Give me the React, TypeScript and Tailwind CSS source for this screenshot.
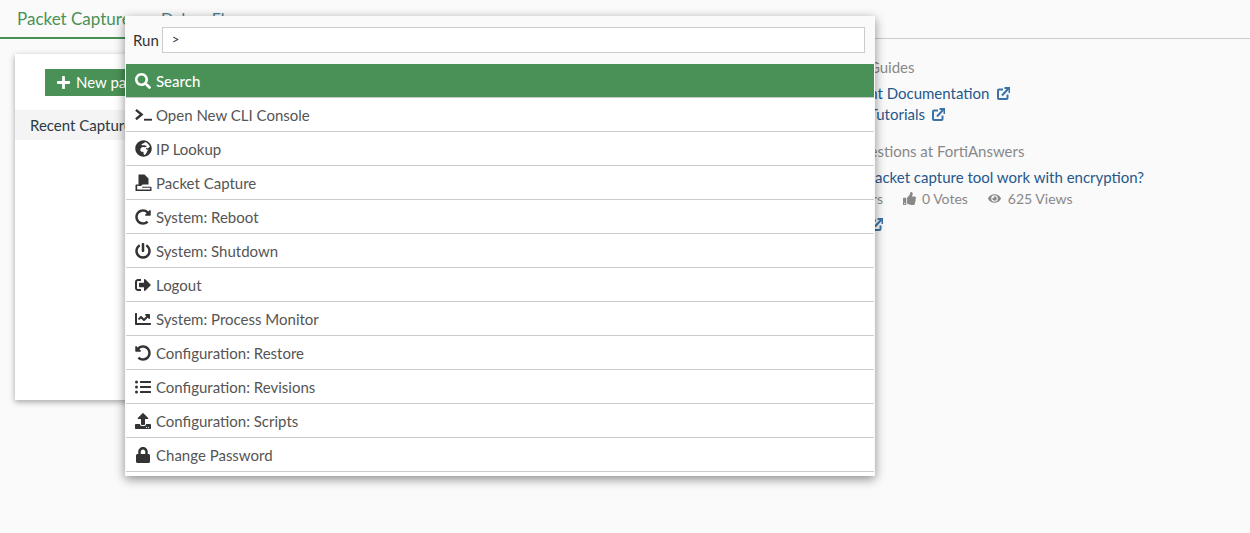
import React from "react";
import { FaSearch, FaGlobeAfrica, FaPowerOff, FaSignOutAlt, FaChartLine, FaUndoAlt, FaRedoAlt, FaListUl, FaUpload, FaLock, FaPlus, FaThumbsUp, FaEye } from "react-icons/fa";

const Terminal = () => (
  <svg width="17" height="14" viewBox="0 0 18 14" fill="none" stroke="currentColor">
    <path d="M1 1.500 L7 6.500 L1 11.500" strokeWidth="2.500" />
    <path d="M9.500 12 H18" strokeWidth="2" />
  </svg>
);
const Capture = () => (
  <svg width="17" height="17" viewBox="0 0 17 17" fill="currentColor">
    <path d="M3.500 .5h6l4 4v6H9c-1.400 0-2.200.4-2.800 1.500H3.500z" />
    <path d="M1.500 10.500h3v1.200H2.200v3.800h13v-1.700H8.500c-1 0-1.500-.4-1.800-1h8.800c.6 0 1 .4 1 1v2.700c0 .6-.4 1-1 1H1.500c-.6 0-1-.4-1-1v-5c0-.6.4-1 1-1z" />
  </svg>
);
const Ext = () => (
  <svg width="13" height="13" viewBox="0 0 13 13" fill="none" stroke="#3b73a6" strokeWidth="2" className="shrink-0">
    <path d="M6 2.500H2a1 1 0 0 0-1 1V11a1 1 0 0 0 1 1h7.500a1 1 0 0 0 1-1V7.500" />
    <path d="M5 8.500 L11.500 1.500" />
    <path d="M7.500 .9h5v5" />
  </svg>
);

const rows: [React.ReactNode, string][] = [
  [<Terminal />, "Open New CLI Console"],
  [<FaGlobeAfrica size={17} />, "IP Lookup"],
  [<Capture />, "Packet Capture"],
  [<FaRedoAlt size={16} />, "System: Reboot"],
  [<FaPowerOff size={16} />, "System: Shutdown"],
  [<FaSignOutAlt size={16} />, "Logout"],
  [<FaChartLine size={16} />, "System: Process Monitor"],
  [<FaUndoAlt size={16} />, "Configuration: Restore"],
  [<FaListUl size={16} />, "Configuration: Revisions"],
  [<FaUpload size={16} />, "Configuration: Scripts"],
  [<FaLock size={16} />, "Change Password"],
];

export default function App() {
  return (
    <div className="relative h-[533px] w-[1250px] overflow-hidden bg-[#fafafa] font-['Lato','Open_Sans',sans-serif] text-[15px] text-[#333]">
      <div className="flex h-[39px] border-b border-[#ccc]">
        <div className="h-[39px] w-[146px] border-b-2 border-[#4a9157] pl-[17px] pt-[6px] text-[17px] text-[#4a9157]">Packet Capture</div>
        <div className="pl-[15px] pt-[6px] text-[16px] text-[#4a7a90]">Debug Flow</div>
      </div>
      <div className="flex pl-[15px] pt-[15px]">
        <div className="h-[346px] w-[600px] bg-white shadow-[0_2px_6px_rgba(0,0,0,0.35)]">
          <div className="px-[30px] pt-[15px]">
            <div className="flex h-[27px] w-[190px] items-center gap-[5px] whitespace-nowrap bg-[#4a9157] pl-[11px] text-white">
              <FaPlus size={15} />
              <span>New packet capture</span>
            </div>
          </div>
          <div className="mt-[14px] h-[30px] bg-[#f4f4f4] pl-[15px] pt-[4px] text-[#2b3a42]">Recent Captures</div>
        </div>
        <div className="ml-[100px] w-[420px] pt-[2px]">
          <div className="flex flex-col items-start pl-[45px] text-left">
            <div className="h-[20px] whitespace-nowrap pl-[39px] text-[#888]">Reference Guides</div>
            <div className="mt-[7px] flex h-[21px] items-center gap-[8px] whitespace-nowrap text-[#25578c]"><span className="ml-[34px]">Development Documentation</span><Ext /></div>
            <div className="flex h-[21px] items-center gap-[7px] whitespace-nowrap text-[#25578c]"><span className="ml-[67px]">Video Tutorials</span><Ext /></div>
            <div className="mt-[15px] h-[20px] whitespace-nowrap text-[#888]"><span className="ml-[36px]">Related Questions at FortiAnswers</span></div>
            <div className="mt-[6px] h-[21px] whitespace-nowrap text-[#25578c]"><span className="ml-[43px]">Does the packet capture tool work with encryption?</span></div>
            <div className="mt-[1px] flex h-[21px] items-center whitespace-nowrap text-[14px] text-[#888]">
              <span className="ml-[59px]">2 Answers</span>
              <FaThumbsUp size={13} className="ml-[20px] mr-[6px]" />
              <span>0 Votes</span>
              <FaEye size={13} className="ml-[20px] mr-[7px]" />
              <span>625 Views</span>
            </div>
            <div className="mt-[8px] flex h-[14px] items-center"><span className="ml-[110px]"><Ext /></span></div>
          </div>
        </div>
      </div>

      <div className="absolute left-[125px] top-[16px] w-[750px] bg-[#fafafa] px-px shadow-[0_3px_10px_rgba(0,0,0,0.45)]">
        <div className="flex h-[48px] items-center pl-[7px] pr-[9px]">
          <span className="text-[#333]">Run</span>
          <div className="ml-[3px] flex h-[26px] flex-1 items-center border border-[#ccc] bg-white pl-[9px] text-[13px]">&gt;</div>
        </div>
        <div className="flex h-[33px] items-center bg-[#4a9157] pl-[9px] font-medium text-white">
          <span className="flex w-[21px] items-center"><FaSearch size={16} /></span>
          <span className="pt-[2px]">Search</span>
        </div>
        <div className="bg-white pb-[4px]">
          <div className="h-px bg-[#ccc]" />
          {rows.map(([icon, label]) => (
            <div key={label} className="flex h-[34px] items-center border-b border-[#ccc] pl-[9px] text-[#555]">
              <span className="flex w-[21px] items-center text-[#333]">{icon}</span>
              <span className="pt-[2px]">{label}</span>
            </div>
          ))}
        </div>
      </div>
    </div>
  );
}
